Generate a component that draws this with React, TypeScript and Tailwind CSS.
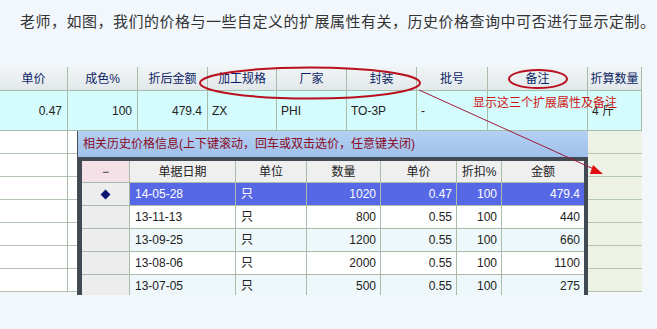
const FONT = "font-['Liberation_Sans','Noto_Sans_CJK_SC',sans-serif]";

const mainCols = [
  { label: "单价", w: "w-[68px]", value: "0.47", align: "right" },
  { label: "成色%", w: "w-[70px]", value: "100", align: "right" },
  { label: "折后金额", w: "w-[70px]", value: "479.4", align: "right" },
  { label: "加工规格", w: "w-[69px]", value: "ZX", align: "left" },
  { label: "厂家", w: "w-[70px]", value: "PHI", align: "left" },
  { label: "封装", w: "w-[70px]", value: "TO-3P", align: "left" },
  { label: "批号", w: "w-[71px]", value: "-", align: "left" },
  { label: "备注", w: "w-[100px]", value: "", align: "left" },
  { label: "折算数量", w: "w-[54px]", value: "4 斤", align: "left" },
];

const histCols = [
  { label: "单据日期", w: "w-[106px]", align: "left" },
  { label: "单位", w: "w-[71px]", align: "left" },
  { label: "数量", w: "w-[74px]", align: "right" },
  { label: "单价", w: "w-[76px]", align: "right" },
  { label: "折扣%", w: "w-[45px]", align: "right" },
  { label: "金额", w: "w-[82px]", align: "right" },
];

const history = [
  ["14-05-28", "只", "1020", "0.47", "100", "479.4"],
  ["13-11-13", "只", "800", "0.55", "100", "440"],
  ["13-09-25", "只", "1200", "0.55", "100", "660"],
  ["13-08-06", "只", "2000", "0.55", "100", "1100"],
  ["13-07-05", "只", "500", "0.55", "100", "275"],
];

const bodyRows = [0, 1, 2, 3, 4, 5, 6];

export default function App() {
  return (
    <div className={`relative w-[657px] h-[329px] overflow-hidden bg-[#f2f7fc] ${FONT}`}>
      <p className="pt-[12px] pl-[20px] text-[15px] leading-[20px] tracking-[0.5px] text-[#333] whitespace-nowrap">
        老师，如图，我们的价格与一些自定义的扩展属性有关，历史价格查询中可否进行显示定制。
      </p>

      <div className="mt-[35px] w-[642px] h-[228px] overflow-hidden text-[12px]">
        {/* header */}
        <div className="flex h-[24px] bg-gradient-to-b from-[#f1f4f5] to-[#e2e8ea] border-b border-[#a9bca9]">
          {mainCols.map((c) => (
            <div
              key={c.label}
              className={`${c.w} flex items-center justify-center border-r border-[#a9bca9] text-[#0c1f66]`}
            >
              {c.label}
            </div>
          ))}
        </div>

        {/* data row */}
        <div className="flex h-[40px] bg-[#d5fcfc] border-b border-[#a9bca9]">
          {mainCols.map((c) => (
            <div
              key={c.label}
              className={
                `${c.w} flex items-center border-r border-[#a9bca9] text-[#222] ` +
                (c.align === "right" ? "justify-end pr-[5px]" : "pl-[4px]")
              }
            >
              {c.value}
            </div>
          ))}
        </div>

        {/* body */}
        <div className="flex">
          <div className="w-[77px]">
            {bodyRows.map((r) => (
              <div key={r} className="flex h-[23px] bg-white border-b border-[#b3c4b3]">
                <div className="w-[68px] border-r border-[#a9bca9]" />
                <div className="w-[9px]" />
              </div>
            ))}
          </div>

          <HistoryPopup />

          <div className="w-[54px]">
            {bodyRows.map((r) => (
              <div key={r} className="h-[23px] bg-[#eef2e5] border-b border-[#b5c6b0]" />
            ))}
          </div>
        </div>
      </div>

      {/* annotations */}
      <svg
        className="absolute left-0 top-0 pointer-events-none"
        width="657"
        height="329"
        viewBox="0 0 657 329"
      >
        <ellipse cx="310" cy="83" rx="110" ry="15.5" fill="none" stroke="#b8101e" strokeWidth="2" />
        <ellipse cx="538" cy="79" rx="29" ry="9" fill="none" stroke="#b8101e" strokeWidth="2" />
        <line x1="419" y1="90" x2="596" y2="170" stroke="#a01a3a" strokeWidth="1" />
        <polygon points="593,165 603,174 590,174" fill="#e01010" />
      </svg>
      <div className="absolute left-[473px] top-[95px] text-[12px] leading-[16px] text-[#d01414] whitespace-nowrap">
        显示这三个扩展属性及备注
      </div>
    </div>
  );
}

function HistoryPopup() {
  return (
    <div className="w-[511px] border-l border-[#4a4f55] bg-[#a8c8ef]">
      <div className="h-[26px] flex items-center pl-[5px] bg-gradient-to-b from-[#b4d1f4] to-[#9fc0ea] text-[12px] text-[#8a0a1e] whitespace-nowrap">
        相关历史价格信息(上下键滚动，回车或双击选价，任意键关闭)
      </div>
      <div className="border-x-4 border-t-4 border-[#414a52] bg-white">
        <div className="flex h-[22px] bg-[#efefef] border-b border-[#a9bca9]">
          <div className="w-[48px] flex items-center justify-center bg-[#f6e0e8] border-r border-[#a9bca9] text-[#333]">
            −
          </div>
          {histCols.map((c, i) => (
            <div
              key={c.label}
              className={
                `${c.w} flex items-center justify-center text-[#222] ` +
                (i < histCols.length - 1 ? "border-r border-[#a9bca9]" : "")
              }
            >
              {c.label}
            </div>
          ))}
        </div>
        {history.map((row, r) => {
          const sel = r === 0;
          return (
            <div key={row[0]} className="flex h-[23px] border-b border-[#a9bca9]">
              <div className="w-[48px] flex items-center justify-center bg-[#ededed] border-r border-[#a9bca9]">
                {sel && <div className="w-[7px] h-[7px] rotate-45 bg-[#0b1470]" />}
              </div>
              {histCols.map((c, i) => (
                <div
                  key={c.label}
                  className={
                    `${c.w} flex items-center ` +
                    (i < histCols.length - 1 ? "border-r border-[#a9bca9] " : "") +
                    (c.align === "right" ? "justify-end pr-[4px] " : "pl-[5px] ") +
                    (sel
                      ? "bg-[#5668e6] text-white"
                      : r % 2 === 0
                        ? "bg-[#eef8fb] text-[#222]"
                        : "bg-white text-[#222]")
                  }
                >
                  {row[i]}
                </div>
              ))}
            </div>
          );
        })}
      </div>
    </div>
  );
}
